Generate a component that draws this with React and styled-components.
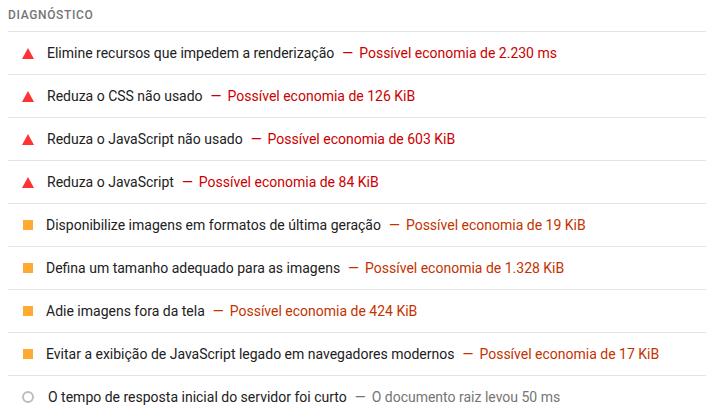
import styled, { createGlobalStyle } from "styled-components";

const GlobalStyle = createGlobalStyle`
  body {
    margin: 0;
    background: #fff;
    font-family: Roboto, "Liberation Sans", sans-serif;
  }
`;

const Section = styled.section`
  padding-left: 8px;
`;

const Header = styled.div`
  height: 31px;
  display: flex;
  align-items: center;
  padding-bottom: 1px;
  box-sizing: border-box;
  font-size: 12px;
  font-weight: 500;
  letter-spacing: 0.65px;
  color: #757575;
`;

const List = styled.ul`
  list-style: none;
  margin: 0;
  padding: 0;
`;

const Row = styled.li`
  display: flex;
  align-items: center;
  height: 43px;
  box-sizing: border-box;
  border-top: 1px solid #e4e4e4;
  padding-left: 14px;
  font-size: 14px;
  color: #212121;
`;

const IconBox = styled.span`
  width: 12px;
  height: 12px;
  flex: none;
  display: flex;
  align-items: center;
  justify-content: center;
  margin-right: ${(p) => p.$gap}px;
`;

const Square = styled.span`
  width: 10px;
  height: 10px;
  background: #ffaa33;
`;

const Circle = styled.span`
  width: 8px;
  height: 8px;
  border: 2px solid #bdbdbd;
  border-radius: 50%;
`;

const Title = styled.span`
  white-space: nowrap;
`;

const Display = styled.span`
  margin-left: 8px;
  white-space: nowrap;
  color: ${(p) =>
    p.$level === "fail" ? "#cc0000" : p.$level === "average" ? "#c33300" : "#757575"};

  &::before {
    content: "—";
    margin-right: 6px;
  }
`;

const Triangle = () => (
  <svg width="12" height="12" viewBox="0 0 12 12">
    <polygon points="6,1 12,12 0,12" fill="#ff3333" />
  </svg>
);

const audits = [
  { level: "fail", title: "Elimine recursos que impedem a renderização", text: "Possível economia de 2.230 ms" },
  { level: "fail", title: "Reduza o CSS não usado", text: "Possível economia de 126 KiB" },
  { level: "fail", title: "Reduza o JavaScript não usado", text: "Possível economia de 603 KiB" },
  { level: "fail", title: "Reduza o JavaScript", text: "Possível economia de 84 KiB" },
  { level: "average", title: "Disponibilize imagens em formatos de última geração", text: "Possível economia de 19 KiB" },
  { level: "average", title: "Defina um tamanho adequado para as imagens", text: "Possível economia de 1.328 KiB" },
  { level: "average", title: "Adie imagens fora da tela", text: "Possível economia de 424 KiB" },
  { level: "average", title: "Evitar a exibição de JavaScript legado em navegadores modernos", text: "Possível economia de 17 KiB" },
  { level: "info", title: "O tempo de resposta inicial do servidor foi curto", text: "O documento raiz levou 50 ms" },
];

function ScoreIcon({ level }) {
  if (level === "fail") {
    return (
      <IconBox $gap={13}>
        <Triangle />
      </IconBox>
    );
  }
  if (level === "average") {
    return (
      <IconBox $gap={12}>
        <Square />
      </IconBox>
    );
  }
  return (
    <IconBox $gap={14}>
      <Circle />
    </IconBox>
  );
}

export default function App() {
  return (
    <Section>
      <GlobalStyle />
      <Header>DIAGNÓSTICO</Header>
      <List>
        {audits.map((a) => (
          <Row key={a.title}>
            <ScoreIcon level={a.level} />
            <Title>{a.title}</Title>
            <Display $level={a.level}>{a.text}</Display>
          </Row>
        ))}
      </List>
    </Section>
  );
}
